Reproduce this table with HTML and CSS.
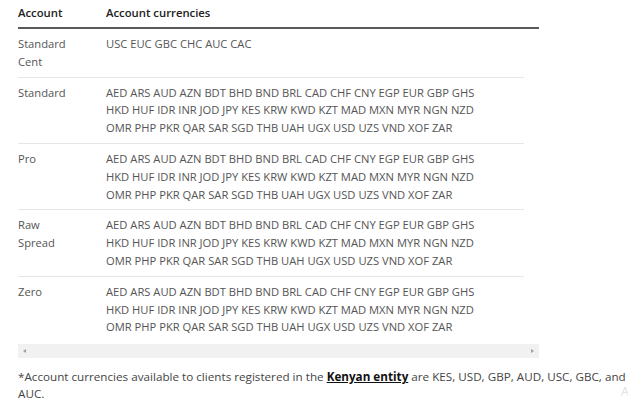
FILE: index.html
```html
<!DOCTYPE html>
<html>
<head>
<meta charset="utf-8">
<link rel="stylesheet" href="styles.css">
</head>
<body>
<div class="wrap">
  <div class="table">
    <div class="thead">
      <div class="c1">Account</div>
      <div class="c2">Account currencies</div>
    </div>
    <div class="row">
      <div class="c1">Standard<br>Cent</div>
      <div class="c2">USC EUC GBC CHC AUC CAC</div>
    </div>
    <div class="row">
      <div class="c1">Standard</div>
      <div class="c2">AED ARS AUD AZN BDT BHD BND BRL CAD CHF CNY EGP EUR GBP GHS<br>HKD HUF IDR INR JOD JPY KES KRW KWD KZT MAD MXN MYR NGN NZD<br>OMR PHP PKR QAR SAR SGD THB UAH UGX USD UZS VND XOF ZAR</div>
    </div>
    <div class="row">
      <div class="c1">Pro</div>
      <div class="c2">AED ARS AUD AZN BDT BHD BND BRL CAD CHF CNY EGP EUR GBP GHS<br>HKD HUF IDR INR JOD JPY KES KRW KWD KZT MAD MXN MYR NGN NZD<br>OMR PHP PKR QAR SAR SGD THB UAH UGX USD UZS VND XOF ZAR</div>
    </div>
    <div class="row">
      <div class="c1">Raw<br>Spread</div>
      <div class="c2">AED ARS AUD AZN BDT BHD BND BRL CAD CHF CNY EGP EUR GBP GHS<br>HKD HUF IDR INR JOD JPY KES KRW KWD KZT MAD MXN MYR NGN NZD<br>OMR PHP PKR QAR SAR SGD THB UAH UGX USD UZS VND XOF ZAR</div>
    </div>
    <div class="row last">
      <div class="c1">Zero</div>
      <div class="c2">AED ARS AUD AZN BDT BHD BND BRL CAD CHF CNY EGP EUR GBP GHS<br>HKD HUF IDR INR JOD JPY KES KRW KWD KZT MAD MXN MYR NGN NZD<br>OMR PHP PKR QAR SAR SGD THB UAH UGX USD UZS VND XOF ZAR</div>
    </div>
  </div>
  <div class="scrollbar">
    <span class="arrow left"></span>
    <span class="arrow right"></span>
  </div>
  <p class="note">*Account currencies available to clients registered in the <a class="link">Kenyan entity</a> are KES, USD, GBP, AUD, USC, GBC, and AUC.</p>
</div>
<span class="ghost">A</span>
</body>
</html>
```

FILE: styles.css
```css
html, body {
  margin: 0;
  padding: 0;
  background: #ffffff;
  overflow: hidden;
}
body {
  font-family: "Open Sans", "Liberation Sans", sans-serif;
  color: #555555;
  font-size: 11.2px;
  width: 628px;
  height: 405px;
  position: relative;
}
.wrap {
  padding-left: 18px;
}
.table {
  width: 521px;
}
.thead {
  display: flex;
  height: 29px;
  box-sizing: border-box;
  padding-top: 4px;
  line-height: 18px;
  border-bottom: 2px solid #5a5a5a;
  color: #222222;
  font-weight: 600;
  font-size: 11.3px;
}
.c1 {
  width: 88px;
  flex: none;
}
.c2 {
  flex: 1;
}
.row {
  display: flex;
  width: 506px;
  padding: 6px 0;
  line-height: 17.8px;
  border-bottom: 1px solid #e6e6e6;
  white-space: nowrap;
}
.row.last {
  border-bottom: none;
}
.scrollbar {
  width: 521px;
  height: 14px;
  margin-top: 2px;
  background: #f1f1f1;
  position: relative;
}
.arrow {
  position: absolute;
  top: 5px;
  width: 0;
  height: 0;
  border-top: 2px solid transparent;
  border-bottom: 2px solid transparent;
}
.arrow.left {
  left: 5px;
  border-right: 3px solid #a0a0a0;
}
.arrow.right {
  right: 5px;
  border-left: 3px solid #a0a0a0;
}
.note {
  margin: 10px 0 0 0;
  width: 612px;
  font-size: 11.68px;
  line-height: 17px;
  color: #444444;
}
.link {
  color: #111111;
  font-weight: 700;
  text-decoration: underline;
}
.ghost {
  position: absolute;
  left: 621px;
  top: 384px;
  font-size: 13px;
  line-height: 14px;
  color: #d4d4d4;
  font-weight: 300;
}
```
